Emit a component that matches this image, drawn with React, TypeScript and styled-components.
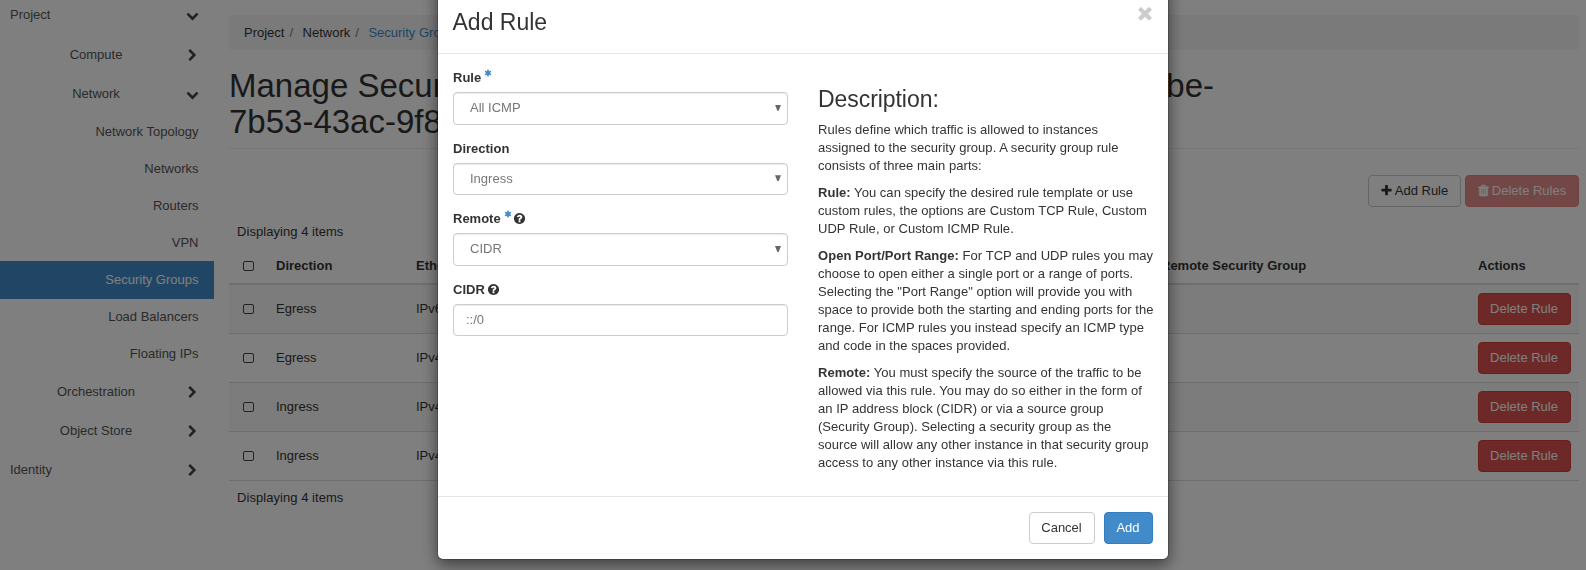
import React from 'react';
import styled, { createGlobalStyle, css } from 'styled-components';

const GlobalStyle = createGlobalStyle`
  * { box-sizing: border-box; }
  html, body { margin: 0; height: 570px; overflow: hidden; background: #fff; }
  body, button, input {
    font-family: "Liberation Sans", Arial, sans-serif;
    font-size: 13px;
    line-height: 18px;
    color: #333;
  }
`;

const PATHS = {
  down: 'M1683 808l-742 741q-19 19-45 19t-45-19l-742-741q-19-19-19-45.5t19-45.5l166-165q19-19 45-19t45 19l531 531 531-531q19-19 45-19t45 19l166 165q19 19 19 45.5t-19 45.5z',
  right: 'M1363 877l-742 742q-19 19-45 19t-45-19l-166-166q-19-19-19-45t19-45l531-531-531-531q-19-19-19-45t19-45l166-166q19-19 45-19t45 19l742 742q19 19 19 45t-19 45z',
  times: 'M1490 1322q0 40-28 68l-136 136q-28 28-68 28t-68-28l-294-294-294 294q-28 28-68 28t-68-28l-136-136q-28-28-28-68t28-68l294-294-294-294q-28-28-28-68t28-68l136-136q28-28 68-28t68 28l294 294 294-294q28-28 68-28t68 28l136 136q28 28 28 68t-28 68l-294 294 294 294q28 28 28 68z',
  plus: 'M1600 736v192q0 40-28 68t-68 28h-416v416q0 40-28 68t-68 28h-192q-40 0-68-28t-28-68v-416h-416q-40 0-68-28t-28-68v-192q0-40 28-68t68-28h416v-416q0-40 28-68t68-28h192q40 0 68 28t28 68v416h416q40 0 68 28t28 68z',
  question: 'M1024 1376v-192q0-14-9-23t-23-9h-192q-14 0-23 9t-9 23v192q0 14 9 23t23 9h192q14 0 23-9t9-23zm256-672q0-88-55.5-163t-138.5-116-170-41q-243 0-371 213-15 24 8 42l132 100q7 6 19 6 16 0 25-12 53-68 86-92 34-24 86-24 48 0 85.5 26t37.5 59q0 38-20 61t-68 45q-63 28-115.5 86.5t-52.5 125.5v36q0 14 9 23t23 9h192q14 0 23-9t9-23q0-19 21.5-49.5t54.5-49.5q32-18 49-28.5t46-35 44.5-48 28-60.5 12.5-81zm384 192q0 209-103 385.5t-279.5 279.5-385.5 103-385.5-103-279.5-279.5-103-385.5 103-385.5 279.5-279.5 385.5-103 385.5 103 279.5 279.5 103 385.5z',
  trash: 'M704 1376v-704q0-14-9-23t-23-9h-64q-14 0-23 9t-9 23v704q0 14 9 23t23 9h64q14 0 23-9t9-23zm256 0v-704q0-14-9-23t-23-9h-64q-14 0-23 9t-9 23v704q0 14 9 23t23 9h64q14 0 23-9t9-23zm256 0v-704q0-14-9-23t-23-9h-64q-14 0-23 9t-9 23v704q0 14 9 23t23 9h64q14 0 23-9t9-23zm-544-992h448l-48-117q-7-9-17-11h-317q-10 2-17 11zm928 32v64q0 14-9 23t-23 9h-96v948q0 83-47 143.5t-113 60.5h-832q-66 0-113-58.5t-47-141.5v-952h-96q-14 0-23-9t-9-23v-64q0-14 9-23t23-9h309l70-167q15-37 54-63t79-26h320q40 0 79 26t54 63l70 167h309q14 0 23 9t9 23z',
  asterisk: 'M1546 1050q46 26 59.5 77.5t-12.5 97.5l-64 110q-26 46-77.5 59.5t-97.5-12.5l-266-153v307q0 52-38 90t-90 38h-128q-52 0-90-38t-38-90v-307l-266 153q-46 26-97.5 12.5t-77.5-59.5l-64-110q-26-46-12.5-97.5t59.5-77.5l266-154-266-154q-46-26-59.5-77.5t12.5-97.5l64-110q26-46 77.5-59.5t97.5 12.5l266 153v-307q0-52 38-90t90-38h128q52 0 90 38t38 90v307l266-153q46-26 97.5-12.5t77.5 59.5l64 110q26 46 12.5 97.5t-59.5 77.5l-266 154z',
};

const Svg = styled.svg<{ $size: number; $heavy: boolean }>`
  width: ${(p) => p.$size}px;
  height: ${(p) => p.$size}px;
  flex: none;
  fill: currentColor;
  display: block;
  ${(p) => p.$heavy && css`stroke: currentColor; stroke-width: 60px;`}
`;
const Icon = ({ name, size = 13 }: { name: keyof typeof PATHS; size?: number }) => (
  <Svg $size={size} $heavy={name === 'trash'} viewBox="0 0 1792 1792" aria-hidden="true">
    <path d={PATHS[name]} />
  </Svg>
);

/* ---------- page ---------- */
const Page = styled.div`
  display: flex;
  height: 570px;
  overflow: hidden;
`;
const Sidebar = styled.nav`
  width: 214px;
  flex: none;
  color: #555;
`;
const Group = styled.div<{ $first?: boolean; $nested?: boolean }>`
  display: flex;
  align-items: center;
  justify-content: space-between;
  height: ${(p) => (p.$first ? 35 : 39)}px;
  padding: 0 15px 0 10px;
  ${(p) => p.$first && css`padding-bottom: 5px;`}
  span {
    ${(p) => p.$nested && css`width: 172px; text-align: center;`}
  }
  svg { color: #444; margin-top: 1px; }
`;
const Item = styled.a<{ $active?: boolean }>`
  display: block;
  height: ${(p) => (p.$active ? 38 : 37)}px;
  margin-bottom: ${(p) => (p.$active ? -1 : 0)}px;
  padding: 10px 15.5px 0 0;
  text-align: right;
  ${(p) => p.$active && css`background: #428bca; color: #fff;`}
`;
const Main = styled.main`
  width: 1350px;
  margin-left: 15px;
  padding-top: 15px;
  flex: none;
`;
const Breadcrumb = styled.div`
  display: flex;
  height: 35px;
  padding: 9px 15px 8px;
  background: #f5f5f5;
  border-radius: 4px;
  i { font-style: normal; color: #777; margin: 0 9.5px 0 5px; }
  a { color: #428bca; }
`;
const Title = styled.h1`
  margin: 0;
  height: 99px;
  padding-top: 18px;
  border-bottom: 1px solid #eee;
  font-size: 33px;
  font-weight: 400;
  line-height: 36px;
  white-space: nowrap;
`;
const TitleLine = styled.span`
  display: flex;
  justify-content: space-between;
  width: 985px;
`;
const Toolbar = styled.div`
  display: flex;
  justify-content: flex-end;
  gap: 4px;
  padding-top: 26px;
`;
type Kind = 'default' | 'primary' | 'danger';
const kinds = {
  default: css`background: #fff; border-color: #ccc; color: #333;`,
  primary: css`background: #428bca; border-color: #357ebd; color: #fff;`,
  danger: css`background: #d9534f; border-color: #d43f3a; color: #fff;`,
};
const Button = styled.button<{ $kind?: Kind; $w: number; $faded?: boolean }>`
  display: flex;
  align-items: center;
  justify-content: center;
  gap: 2px;
  width: ${(p) => p.$w}px;
  height: 32px;
  padding: 0 1px 1px 0;
  border: 1px solid;
  border-radius: 4px;
  white-space: nowrap;
  ${(p) => kinds[p.$kind ?? 'default']}
  ${(p) => p.$faded && css`opacity: 0.65;`}
`;
const Count = styled.div<{ $top: number }>`
  padding: ${(p) => p.$top}px 8px 0;
  letter-spacing: 0.05px;
`;
const Row = styled.div<{ $odd?: boolean }>`
  display: grid;
  grid-template-columns: 39px 140px 745px 317px auto;
  align-items: center;
  height: 49px;
  padding: 0 8px;
  border-bottom: 1px solid #ddd;
  background: ${(p) => (p.$odd ? '#f9f9f9' : '#fff')};
`;
const HeadRow = styled(Row)`
  height: 42px;
  margin-top: 2px;
  padding-top: 5px;
  border-bottom-width: 2px;
  font-weight: 700;
`;
const Box = styled.span`
  width: 11px;
  height: 10px;
  margin: 0 0 0 6px;
  border: 1px solid #444;
  border-radius: 2px;
`;

/* ---------- modal ---------- */
const Backdrop = styled.div`
  position: fixed;
  inset: 0;
  background: rgba(0, 0, 0, 0.5);
`;
const Modal = styled.section`
  position: fixed;
  top: -20px;
  left: 437px;
  width: 732px;
  height: 580px;
  display: flex;
  flex-direction: column;
  background: #fff;
  background-clip: padding-box;
  border: 1px solid rgba(0, 0, 0, 0.2);
  border-radius: 6px;
  box-shadow: 0 5px 15px rgba(0, 0, 0, 0.5);
`;
const ModalHeader = styled.header`
  display: flex;
  justify-content: space-between;
  height: 73px;
  padding: 22px 15px 0 14.5px;
  border-bottom: 1px solid #e5e5e5;
  svg { color: #ccc; margin-right: -2px; }
`;
const Heading = styled.h3`
  margin: 0;
  font-size: 23px;
  font-weight: 400;
  line-height: 30px;
`;
const ModalTitle = styled(Heading)`
  padding-top: 4px;
`;
const ModalBody = styled.div`
  display: grid;
  grid-template-columns: 335px 335px;
  gap: 30px;
  flex: 1;
  padding: 15px;
`;
const Label = styled.label`
  display: flex;
  align-items: center;
  height: 18px;
  margin-bottom: 5px;
  font-weight: 700;
`;
const Required = styled.span`
  margin: -11px -1px 0 3px;
  color: #428bca;
`;
const Help = styled.span`
  margin: -1px 0 0 2px;
`;
const Field = styled.div`
  margin-bottom: 15px;
`;
const Control = styled.div<{ $select?: boolean }>`
  display: flex;
  align-items: center;
  justify-content: space-between;
  height: 32.57px;
  padding: 0 6px 0 ${(p) => (p.$select ? 16 : 12)}px;
  border: 1px solid #ccc;
  border-radius: 4px;
  box-shadow: inset 0 1px 1px rgba(0, 0, 0, 0.075);
  color: #777;
`;
const Arrow = styled.span`
  width: 6px;
  height: 6px;
  background: #666;
  clip-path: polygon(0 0, 100% 0, 60% 100%, 40% 100%);
  margin-bottom: 1px;
`;
const Description = styled.div`
  padding-top: 15px;
  white-space: nowrap;
  p { margin: 0 0 9px; letter-spacing: 0.04px; }
  ${Heading} { margin-bottom: 7px; letter-spacing: -0.06px; }
`;
const ModalFooter = styled.footer`
  display: flex;
  justify-content: flex-end;
  gap: 9px;
  height: 63px;
  padding: 15px;
  border-top: 1px solid #e5e5e5;
`;

const rules = [
  ['Egress', 'IPv6'],
  ['Egress', 'IPv4'],
  ['Ingress', 'IPv4'],
  ['Ingress', 'IPv4'],
];
const networkItems = [
  'Network Topology', 'Networks', 'Routers', 'VPN', 'Security Groups', 'Load Balancers', 'Floating IPs',
];

function FormField({ label, value, required, help, select }: {
  label: string; value: string; required?: boolean; help?: boolean; select?: boolean;
}) {
  return (
    <Field>
      <Label>
        {label}
        {required && <Required><Icon name="asterisk" size={8} /></Required>}
        {help && <Help><Icon name="question" /></Help>}
      </Label>
      <Control $select={select}>
        {value}
        {select && <Arrow />}
      </Control>
    </Field>
  );
}

export default function App() {
  return (
    <>
      <GlobalStyle />
      <Page>
        <Sidebar>
          <Group $first><span>Project</span><Icon name="down" /></Group>
          <Group $nested><span>Compute</span><Icon name="right" /></Group>
          <Group $nested><span>Network</span><Icon name="down" /></Group>
          {networkItems.map((n) => <Item key={n} $active={n === 'Security Groups'}>{n}</Item>)}
          <Group $nested><span>Orchestration</span><Icon name="right" /></Group>
          <Group $nested><span>Object Store</span><Icon name="right" /></Group>
          <Group><span>Identity</span><Icon name="right" /></Group>
        </Sidebar>
        <Main>
          <Breadcrumb>
            <span>Project</span><i>/</i><span>Network</span><i>/</i><a>Security Groups</a>
          </Breadcrumb>
          <Title>
            <TitleLine><span>Manage Security Group Rules:</span><span>default (48ad1be-</span></TitleLine>
            7b53-43ac-9f8d-6c1e5a0b7d24)
          </Title>
          <Toolbar>
            <Button $w={93}><Icon name="plus" />Add Rule</Button>
            <Button $w={114} $kind="danger" $faded><Icon name="trash" />Delete Rules</Button>
          </Toolbar>
          <Count $top={16}>Displaying 4 items</Count>
          <HeadRow>
            <Box /><span>Direction</span><span>Ether Type</span><span>Remote Security Group</span><span>Actions</span>
          </HeadRow>
          {rules.map(([dir, ether], i) => (
            <Row key={i} $odd={i % 2 === 0}>
              <Box /><span>{dir}</span><span>{ether}</span><span />
              <Button $w={93} $kind="danger">Delete Rule</Button>
            </Row>
          ))}
          <Count $top={8}>Displaying 4 items</Count>
        </Main>
      </Page>
      <Backdrop />
      <Modal>
        <ModalHeader>
          <ModalTitle>Add Rule</ModalTitle>
          <Icon name="times" size={20} />
        </ModalHeader>
        <ModalBody>
          <div>
            <FormField label="Rule" value="All ICMP" required select />
            <FormField label="Direction" value="Ingress" select />
            <FormField label="Remote" value="CIDR" required help select />
            <FormField label="CIDR" value="::/0" help />
          </div>
          <Description>
            <Heading>Description:</Heading>
            <p>
              Rules define which traffic is allowed to instances<br />
              assigned to the security group. A security group rule<br />
              consists of three main parts:
            </p>
            <p>
              <b>Rule:</b> You can specify the desired rule template or use<br />
              custom rules, the options are Custom TCP Rule, Custom<br />
              UDP Rule, or Custom ICMP Rule.
            </p>
            <p>
              <b>Open Port/Port Range:</b> For TCP and UDP rules you may<br />
              choose to open either a single port or a range of ports.<br />
              Selecting the "Port Range" option will provide you with<br />
              space to provide both the starting and ending ports for the<br />
              range. For ICMP rules you instead specify an ICMP type<br />
              and code in the spaces provided.
            </p>
            <p>
              <b>Remote:</b> You must specify the source of the traffic to be<br />
              allowed via this rule. You may do so either in the form of<br />
              an IP address block (CIDR) or via a source group<br />
              (Security Group). Selecting a security group as the<br />
              source will allow any other instance in that security group<br />
              access to any other instance via this rule.
            </p>
          </Description>
        </ModalBody>
        <ModalFooter>
          <Button $w={66}>Cancel</Button>
          <Button $w={49} $kind="primary">Add</Button>
        </ModalFooter>
      </Modal>
    </>
  );
}
